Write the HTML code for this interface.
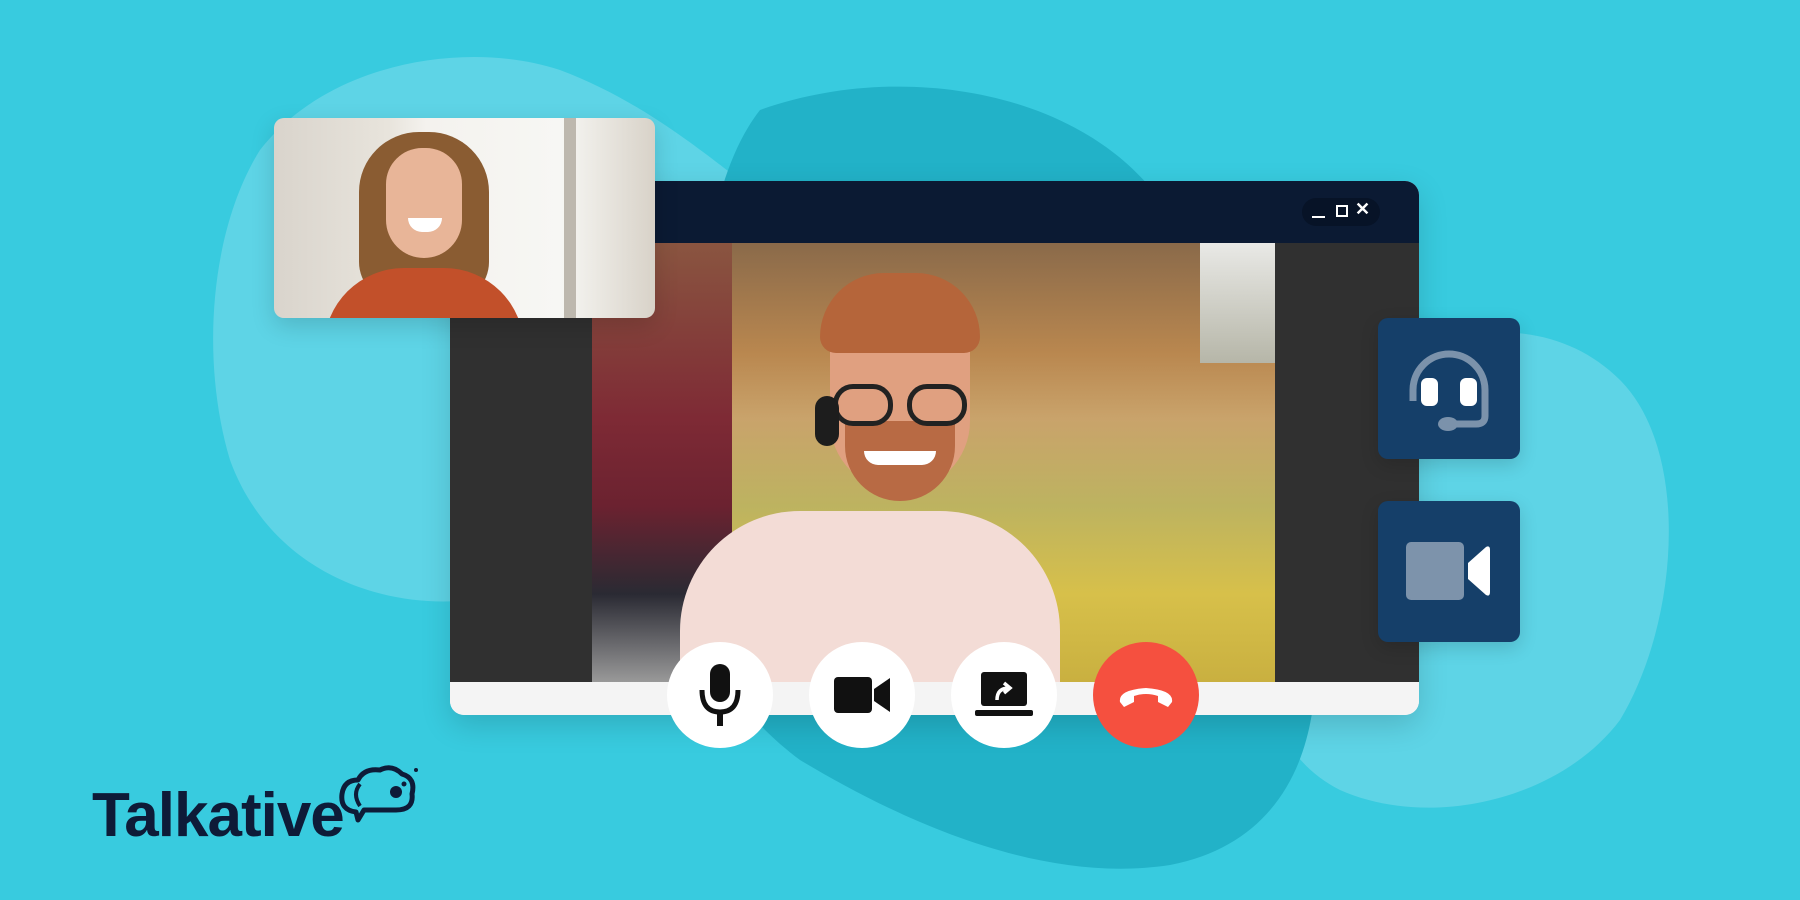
<!DOCTYPE html>
<html><head><meta charset="utf-8"><style>
*{margin:0;padding:0;box-sizing:border-box}
body{width:1800px;height:900px;overflow:hidden;background:#38cbdf;position:relative;font-family:"Liberation Sans",sans-serif}
.abs{position:absolute}
.btn{position:absolute;width:106px;height:106px;border-radius:50%;background:#fff;top:642px;display:flex;align-items:center;justify-content:center}
.panel{position:absolute;left:1378px;width:142px;height:141px;background:#153f69;border-radius:10px;box-shadow:0 6px 18px rgba(0,0,0,.15)}
</style></head><body>
<svg class="abs" style="left:0;top:0" width="1800" height="900">
<path d="M260 150 C330 60 470 40 560 70 C640 100 700 150 740 180 L760 360 C700 470 560 560 470 600 C380 610 270 570 230 460 C200 360 210 230 260 150Z" fill="#5ed4e6"/>
<path d="M1380 360 C1470 320 1560 320 1620 380 C1690 450 1680 620 1620 720 C1560 800 1430 830 1340 790 C1260 750 1250 650 1280 560 C1300 480 1320 400 1380 360Z" fill="#5ed4e6"/>
<path d="M760 110 C900 60 1080 90 1160 200 C1220 290 1280 460 1310 600 C1330 720 1300 840 1170 865 C1040 885 900 820 800 760 C720 700 680 620 690 500 C700 380 690 200 760 110Z" fill="#22b2c8"/>
</svg>
<div class="abs" style="left:450px;top:181px;width:969px;height:534px;border-radius:14px;background:#f4f4f4;overflow:hidden;box-shadow:0 10px 30px rgba(0,0,0,.15)">
  <div class="abs" style="left:0;top:0;width:969px;height:62px;background:#0b1a33"></div>
  <div class="abs" style="left:852px;top:17px;width:78px;height:28px;border-radius:14px;background:#071327"></div>
  <div class="abs" style="left:862px;top:35px;width:13px;height:2px;background:#fff"></div>
  <div class="abs" style="left:886px;top:24px;width:12px;height:12px;border:2px dashed #fff"></div>
  <div class="abs" style="left:905px;top:18px;color:#fff;font-size:18px;font-weight:bold">✕</div>
  <div class="abs" style="left:0;top:62px;width:969px;height:439px;background:#303030"></div>
  <div class="abs" style="left:142px;top:62px;width:683px;height:439px;background:linear-gradient(180deg,#8a6a4a 0%,#b9874f 25%,#c9a36b 40%,#bdb360 60%,#d7c04a 80%,#c9b040 100%)"></div>
  <div class="abs" style="left:142px;top:62px;width:140px;height:439px;background:linear-gradient(180deg,#8a5540,#7e2a35 40%,#6b2230 60%,#2a2a33 80%,#999 100%)"></div>
  <div class="abs" style="left:750px;top:62px;width:75px;height:120px;background:linear-gradient(#e9e9e6,#b6b6a8)"></div>
  <div class="abs" style="left:230px;top:330px;width:380px;height:200px;border-radius:120px 120px 0 0;background:#f3dcd6"></div>
  <div class="abs" style="left:380px;top:110px;width:140px;height:200px;border-radius:60px 60px 70px 70px;background:#e0a080"></div>
  <div class="abs" style="left:370px;top:92px;width:160px;height:80px;border-radius:80px 80px 20px 20px;background:#b5653a"></div>
  <div class="abs" style="left:395px;top:240px;width:110px;height:80px;border-radius:0 0 55px 55px;background:#b86a44"></div>
  <div class="abs" style="left:383px;top:203px;width:60px;height:42px;border-radius:20px;border:5px solid #222"></div>
  <div class="abs" style="left:457px;top:203px;width:60px;height:42px;border-radius:20px;border:5px solid #222"></div>
  <div class="abs" style="left:365px;top:215px;width:24px;height:50px;border-radius:12px;background:#1d1d1d"></div>
  <div class="abs" style="left:414px;top:270px;width:72px;height:14px;border-radius:0 0 36px 36px;background:#fff"></div>
  <div class="abs" style="left:0;top:501px;width:969px;height:33px;background:#f4f4f4"></div>
</div>
<div class="abs" style="left:274px;top:118px;width:381px;height:200px;border-radius:10px;overflow:hidden;background:linear-gradient(90deg,#d9d4cc 0%,#e8e4dc 30%,#f4f2ee 40%,#f7f7f4 75%,#d8d2c8 100%);box-shadow:0 8px 24px rgba(0,0,0,.15)">
  <div class="abs" style="left:85px;top:14px;width:130px;height:170px;border-radius:60px 60px 40px 40px;background:#8a5c32"></div>
  <div class="abs" style="left:112px;top:30px;width:76px;height:110px;border-radius:38px 38px 40px 40px;background:#e8b598"></div>
  <div class="abs" style="left:134px;top:100px;width:34px;height:14px;border-radius:0 0 17px 17px;background:#fff"></div>
  <div class="abs" style="left:50px;top:150px;width:200px;height:80px;border-radius:90px 90px 0 0;background:#c2502a"></div>
  <div class="abs" style="left:290px;top:0;width:12px;height:200px;background:#bdb8ae"></div>
</div>
<div class="btn" style="left:667px"><svg width="50" height="66" viewBox="0 0 50 66"><rect x="15" y="2" width="20" height="38" rx="10" fill="#111"/><path d="M7 28 Q7 50 25 50 Q43 50 43 28" fill="none" stroke="#111" stroke-width="5"/><rect x="22" y="50" width="6" height="14" fill="#111"/></svg></div>
<div class="btn" style="left:809px"><svg width="56" height="40" viewBox="0 0 56 40"><rect x="0" y="2" width="38" height="36" rx="4" fill="#111"/><path d="M40 14 L56 3 V37 L40 26Z" fill="#111"/></svg></div>
<div class="btn" style="left:951px"><svg width="58" height="46" viewBox="0 0 58 46"><rect x="6" y="0" width="46" height="34" rx="3" fill="#111"/><rect x="0" y="38" width="58" height="6" rx="2" fill="#111"/><path d="M22 28 Q22 16 34 16 M29 11 L35 16 L29 21" fill="none" stroke="#fff" stroke-width="3.5"/></svg></div>
<div class="btn" style="left:1093px;background:#f5503f"><svg width="60" height="30" viewBox="0 0 60 30"><path d="M4 22 Q2 10 30 8 Q58 10 56 22 L52 27 L42 22 L42 16 Q30 12 18 16 L18 22 L8 27Z" fill="#fff"/></svg></div>
<div class="panel" style="top:318px"><svg width="142" height="141" viewBox="0 0 142 141"><path d="M35 83 V72 A36 36 0 0 1 107 72 V98 Q107 106 98 106 H78" fill="none" stroke="#7b92ab" stroke-width="7"/><rect x="43" y="60" width="17" height="28" rx="6" fill="#fff"/><rect x="82" y="60" width="17" height="28" rx="6" fill="#fff"/><ellipse cx="70" cy="106" rx="10" ry="7" fill="#7b92ab"/></svg></div>
<div class="panel" style="top:501px"><svg width="142" height="141" viewBox="0 0 142 141"><rect x="28" y="41" width="58" height="58" rx="5" fill="#7d93ab"/><path d="M90 62 L108 46 Q112 44 112 49 V91 Q112 96 108 94 L90 78Z" fill="#fff"/></svg></div>
<div class="abs" style="left:92px;top:780px;font-size:62px;font-weight:bold;color:#0e1b38;letter-spacing:-1px">Talkative</div>
<svg class="abs" style="left:336px;top:764px" width="84" height="64" viewBox="0 0 84 64"><path d="M20 48 Q4 46 6 30 Q8 16 22 16 Q28 4 44 6 Q56 0 66 10 Q80 14 76 30 Q78 46 60 46 H28 L22 56Z" fill="none" stroke="#0e1b38" stroke-width="5" stroke-linejoin="round"/><path d="M24 20 Q16 30 24 42" fill="none" stroke="#0e1b38" stroke-width="4"/><circle cx="60" cy="28" r="6" fill="#0e1b38"/><circle cx="68" cy="20" r="2.5" fill="#0e1b38"/><circle cx="80" cy="6" r="2" fill="#0e1b38"/></svg>
</body></html>
